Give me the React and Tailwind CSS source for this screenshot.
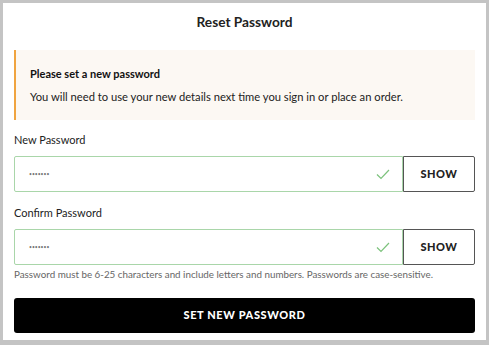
export default function App() {
  const Field = ({ label }) => (
    <div className="flex flex-col">
      <div className="text-[11px] text-[#222] leading-none h-[14px] mb-[8px]">{label}</div>
      <div className="flex h-[36px]">
        <div className="flex-1 flex items-center border border-[#a9d6a9] rounded-l-[2px] pl-[14px] pr-[12px]">
          <span className="text-[5px] text-[#777] leading-none">•••••••</span>
          <div className="flex-1" />
          <svg width="14" height="11" viewBox="0 0 14 11" fill="none">
            <path d="M1 5.5 L5 9.5 L13 1" stroke="#7cc27c" strokeWidth="1.2" />
          </svg>
        </div>
        <button className="w-[72px] border border-[#555] rounded-r-[2px] text-[11px] font-black tracking-[0.5px] text-[#222]">
          SHOW
        </button>
      </div>
    </div>
  );
  return (
    <div
      className="w-[489px] h-[345px] bg-[#c4c4c4] pl-[3px] pr-[3px] pt-[3px] pb-[5px]"
      style={{ fontFamily: "Lato, 'Noto Sans', sans-serif" }}
    >
      <div className="w-full h-full bg-white px-[11px] flex flex-col">
        <div className="h-[47px] flex items-center justify-center text-[13.7px] font-bold text-[#222] pb-[8px]">
          Reset Password
        </div>
        <div className="h-[70px] bg-[#fcf8f3] border-l-2 border-[#f0a440] pl-[14px] flex flex-col justify-center">
          <div className="text-[11px] font-bold text-[#111] leading-none mb-[12px]">Please set a new password</div>
          <div className="text-[11.2px] text-[#222] leading-none">
            You will need to use your new details next time you sign in or place an order.
          </div>
        </div>
        <div className="mt-[14px]">
          <Field label="New Password" />
        </div>
        <div className="mt-[15px]">
          <Field label="Confirm Password" />
        </div>
        <div className="text-[9.8px] text-[#666] leading-none mt-[5px]">
          Password must be 6-25 characters and include letters and numbers. Passwords are case-sensitive.
        </div>
        <button className="mt-[18px] h-[35px] bg-black rounded-[3px] text-white text-[11px] font-black tracking-[0.6px]">
          SET NEW PASSWORD
        </button>
      </div>
    </div>
  );
}
